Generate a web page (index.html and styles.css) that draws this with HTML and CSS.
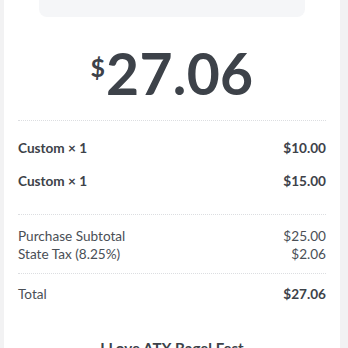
FILE: index.html
```html
<!DOCTYPE html>
<html lang="en">
<head>
  <meta charset="UTF-8" />
  <title>Receipt</title>
  <link rel="stylesheet" href="styles.css">
</head>
<body>
  <div class="card">
    <div class="banner"></div>

    <div class="amount">
      <span class="currency">$</span>
      <span class="value">27.06</span>
    </div>

    <div class="items">
      <div class="row bold">
        <span>Custom × 1</span>
        <span>$10.00</span>
      </div>
      <div class="row bold">
        <span>Custom × 1</span>
        <span>$15.00</span>
      </div>
    </div>

    <div class="summary">
      <div class="row">
        <span>Purchase Subtotal</span>
        <span>$25.00</span>
      </div>
      <div class="row">
        <span>State Tax (8.25%)</span>
        <span>$2.06</span>
      </div>
    </div>

    <div class="total">
      <div class="row">
        <span>Total</span>
        <span class="strong">$27.06</span>
      </div>
    </div>

    <p class="merchant">I Love ATX Bagel Fest</p>
  </div>
</body>
</html>
```

FILE: styles.css
```css
body {
  margin: 0;
  height: 348px;
  background: #f2f2f3;
  overflow: hidden;
  font-family: Lato, "Noto Sans", sans-serif;
  color: #3d4249;
}

.card {
  width: 336px;
  margin-left: 4px;
  min-height: 348px;
  background: #fff;
  padding: 0 14px;
  box-sizing: border-box;
}

.banner {
  width: 266px;
  height: 17px;
  margin: 0 auto;
  background: #f5f6f8;
  border-radius: 0 0 8px 8px;
}

.amount {
  display: flex;
  justify-content: center;
  align-items: flex-start;
  margin-top: 28px;
  height: 75px;
}

.currency {
  font-size: 25px;
  font-weight: 700;
  line-height: 1;
  margin-top: 10px;
  margin-right: 1px;
}

.value {
  font-size: 57px;
  font-weight: 700;
  line-height: 1;
  letter-spacing: 0.3px;
}

.items,
.summary,
.total {
  border-top: 1px dotted #dcdee1;
}

.items {
  display: flex;
  flex-direction: column;
  gap: 13px;
  padding: 17px 0 23px;
}

.summary {
  padding: 12px 0 10px;
}

.total {
  padding-top: 10px;
}

.row {
  display: flex;
  justify-content: space-between;
  font-size: 13.6px;
  line-height: 18px;
  color: #4a4f56;
}

.items .row,
.total .row {
  line-height: 20px;
}

.row.bold,
.strong {
  font-weight: 700;
  color: #3d4249;
}

.merchant {
  margin: 35px 0 0;
  text-align: center;
  font-size: 15px;
  font-weight: 700;
  color: #3d4249;
}
```
